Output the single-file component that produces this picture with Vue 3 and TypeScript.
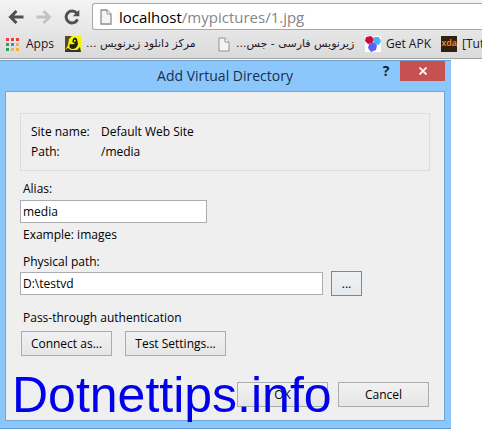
<script setup lang="ts">
import { ref } from 'vue'

const url = ref('localhost/mypictures/1.jpg')
const alias = ref('media')
const physicalPath = ref('D:\\testvd')
const appColours: string[] = [
  '#f23b3b', '#f23b3b', '#f23b3b',
  '#2f9e58', '#2b8cf0', '#fbb13c',
  '#2f9e58', '#fbb13c', '#fbb13c',
]
</script>

<template>
  <div class="browser">
    <header class="chrome">
      <nav class="toolbar" aria-label="Navigation">
        <button class="tool" type="button" aria-label="Back">
          <svg width="16" height="14" viewBox="0 0 16 14"><path d="M15.5 7H3M8.5 1L2.5 7L8.5 13" fill="none" stroke="#505050" stroke-width="3" /></svg>
        </button>
        <button class="tool" type="button" aria-label="Forward">
          <svg width="16" height="14" viewBox="0 0 16 14"><path d="M0.5 7H13M7.5 1L13.5 7L7.5 13" fill="none" stroke="#c2c2c2" stroke-width="2.8" /></svg>
        </button>
        <button class="tool" type="button" aria-label="Reload">
          <svg width="16" height="16" viewBox="0 0 16 16"><path d="M12.8 4.2A6 6 0 1 0 13.6 10.4" fill="none" stroke="#505050" stroke-width="2.9" /><path d="M15.3 0.8V7.3H8.8Z" fill="#505050" /></svg>
        </button>
        <div class="omnibox">
          <svg width="12" height="16" viewBox="0 0 12 16"><path d="M1 1H7L11 5V15H1Z" fill="#f4f4f4" stroke="#8f8f8f" stroke-width="1.3" /><path d="M7 1V5H11" fill="#fff" stroke="#8f8f8f" /></svg>
          <a class="url" :href="'http://' + url"><span class="host">localhost</span>/mypictures/1.jpg</a>
        </div>
      </nav>
      <nav class="bookmarks" aria-label="Bookmarks">
        <a class="bookmark apps" href="#">
          <span class="grid"><i v-for="(c, i) in appColours" :key="i" :style="{ background: c }"></i></span>
          <span>Apps</span>
        </a>
        <a class="bookmark first" href="#">
          <svg width="16" height="16" viewBox="0 0 16 16">
            <rect width="16" height="16" fill="#f5f500" />
            <path d="M0 0H7L4 3L3 9L1 13L0 14Z" fill="#554c25" />
            <path d="M0 14L3 12L6 14L12 14L15 11L16 16H0Z" fill="#37352f" />
            <path d="M8 3Q10 0 12 3L13 8Q12 13 7 13Q3 12 5 8Q9 9 10 7Q6 7 8 3Z" fill="#25230e" />
            <path d="M9 4Q10 3 11 5L9 6Z" fill="#f5f500" />
          </svg>
          <span class="persian" dir="rtl">مرکز دانلود زیرنویس ...</span>
        </a>
        <a class="bookmark second" href="#">
          <svg width="12" height="15" viewBox="0 0 12 15"><path d="M1 1H7L11 5V14H1Z" fill="#f4f4f4" stroke="#929292" /><path d="M7 1V5H11" fill="#fff" stroke="#929292" /></svg>
          <span class="persian" dir="rtl">زیرنویس فارسی - جس...</span>
        </a>
        <a class="bookmark third" href="#">
          <svg width="16" height="16" viewBox="0 0 16 16">
            <rect width="16" height="16" fill="#fff" />
            <path d="M1 1L6 0L9 3L7 7L3 8L0 5Z" fill="#c90b3c" />
            <path d="M9 1L14 1L16 5L14 9L10 8L8 5Z" fill="#48b2f5" />
            <path d="M4 8L8 6L12 9L11 14L6 16L3 12Z" fill="#6060ee" />
          </svg>
          <span>Get APK</span>
        </a>
        <a class="bookmark fourth" href="#">
          <span class="xda">xda</span>
          <span>[Tut</span>
        </a>
      </nav>
    </header>

    <main class="dialog" role="dialog" aria-labelledby="dialog-title">
      <div class="titlebar">
        <h1 id="dialog-title">Add Virtual Directory</h1>
        <div class="caption">
          <button class="help" type="button" aria-label="Help">?</button>
          <button class="close" type="button" aria-label="Close">
            <svg width="8" height="8" viewBox="0 0 8 8"><path d="M0.5 0.5L7.5 7.5M7.5 0.5L0.5 7.5" stroke="#fff" stroke-width="1.8" /></svg>
          </button>
        </div>
      </div>
      <form class="content" @submit.prevent>
        <dl class="site">
          <dt>Site name:</dt><dd>Default Web Site</dd>
          <dt>Path:</dt><dd>/media</dd>
        </dl>
        <label class="line" for="alias">Alias:</label>
        <input id="alias" v-model="alias" class="field alias" type="text">
        <p class="line example">Example: images</p>
        <label class="line" for="path">Physical path:</label>
        <div class="path-row">
          <input id="path" v-model="physicalPath" class="field path" type="text">
          <button class="btn browse" type="button">...</button>
        </div>
        <p class="line auth">Pass-through authentication</p>
        <div class="actions">
          <button class="btn connect" type="button">Connect as...</button>
          <button class="btn test" type="button">Test Settings...</button>
        </div>
        <div class="footer">
          <button class="btn" type="submit">OK</button>
          <button class="btn" type="button">Cancel</button>
        </div>
      </form>
      <div class="watermark">Dotnettips.info</div>
    </main>
  </div>
</template>

<style>
body {
  background: #fff;
}
</style>

<style scoped>
* {
  box-sizing: border-box;
}
.browser {
  font-family: "Open Sans", "Noto Sans", "DejaVu Sans", sans-serif;
  font-size: 12px;
  line-height: 16px;
  color: #000;
  overflow: hidden;
}
button {
  font: inherit;
  color: inherit;
  padding: 0;
}
svg {
  display: block;
  flex: none;
}
.chrome {
  background: linear-gradient(#f4f4f4, #dadada);
  border-bottom: 1px solid #a0a0a0;
}
.toolbar {
  display: flex;
  align-items: center;
  height: 30px;
  padding: 3px 0 0 8px;
  gap: 12px;
}
.tool {
  border: 0;
  background: none;
}
.omnibox {
  flex: 1;
  display: flex;
  align-items: center;
  gap: 7px;
  height: 27px;
  padding-left: 7px;
  background: #fff;
  border: 1px solid #a8a8a8;
  border-right: 0;
  border-radius: 3px 0 0 3px;
}
.url {
  color: #858585;
  font-size: 15px;
  line-height: 20px;
  text-decoration: none;
}
.host {
  color: #000;
}
.bookmarks {
  display: flex;
  align-items: center;
  height: 28px;
  padding-left: 6px;
  white-space: nowrap;
  overflow: hidden;
}
.bookmark {
  display: flex;
  align-items: center;
  flex: none;
  gap: 5px;
  color: #1e1428;
  text-decoration: none;
}
.apps {
  gap: 7px;
  width: 59px;
}
.first {
  width: 153px;
}
.second {
  gap: 6px;
  width: 147px;
}
.third {
  width: 76px;
}
.grid {
  display: grid;
  grid-template-columns: repeat(3, 3px);
  grid-auto-rows: 3px;
  gap: 2px;
}
.persian {
  font-family: "DejaVu Sans", sans-serif;
  font-size: 11px;
}
.xda {
  width: 16px;
  height: 16px;
  background: #32200f;
  color: #f58220;
  font: bold 9px/15px "Liberation Sans", sans-serif;
  text-align: center;
}
.dialog {
  position: relative;
  margin: 1px 31px 0 0;
  padding: 0 6px 7px 5px;
  background: #8cc7fb;
  border-top: 1px solid #6f9fca;
  border-bottom: 1px solid #5f9bd2;
}
.titlebar {
  display: grid;
  grid-template-columns: 1fr auto 1fr;
  height: 30px;
}
h1 {
  grid-column: 2;
  margin: 0;
  padding-top: 5px;
  font-size: 14px;
  line-height: 20px;
  font-weight: 400;
  color: #15304c;
}
.caption {
  display: flex;
  justify-content: flex-end;
  align-items: flex-start;
}
.help {
  width: 28px;
  height: 20px;
  border: 0;
  background: none;
  font-size: 14px;
  font-weight: 700;
  color: #0c2033;
}
.close {
  display: flex;
  align-items: center;
  justify-content: center;
  width: 45px;
  height: 20px;
  border: 0;
  background: #c75050;
}
.content {
  padding: 21px 14px 13px;
  background: #efefef;
  border: 1px solid #71a6d8;
}
.site {
  display: grid;
  grid-template-columns: 70px 1fr;
  row-gap: 3px;
  margin: 0 0 10px;
  padding: 10px;
  height: 58px;
  border: 1px solid #dcdede;
}
dd {
  margin: 0;
}
.site,
.line,
.field,
.btn {
  font-size: 12px;
  line-height: 16px;
}
.line {
  display: block;
  margin: 0;
  padding-left: 3px;
}
.field {
  display: block;
  height: 23px;
  padding: 0 2px;
  font-family: inherit;
  color: #000;
  background: #fff;
  border: 1px solid #a9adb0;
  border-radius: 0;
}
.alias {
  width: 187px;
  margin: 3px 0 4px;
}
.example {
  margin-bottom: 11px;
}
.path-row {
  display: flex;
  align-items: center;
  gap: 8px;
  margin-top: 1px;
}
.path {
  width: 303px;
}
.btn {
  width: 91px;
  height: 25px;
  background: linear-gradient(#f1f1f1, #e6e6e6);
  border: 1px solid #a9adb0;
}
.browse {
  width: 31px;
  border-color: #4398dc;
  background: linear-gradient(#eef2f5, #e6eaed);
}
.auth {
  margin: 14px 0 5px;
}
.actions {
  display: flex;
  gap: 13px;
  padding-left: 1px;
}
.test {
  width: 101px;
}
.footer {
  display: flex;
  justify-content: flex-end;
  gap: 10px;
  margin-top: 26px;
  padding-right: 1px;
}
.watermark {
  position: absolute;
  left: 12px;
  bottom: 5px;
  font-family: "Liberation Sans", Arial, sans-serif;
  font-size: 50px;
  line-height: 56px;
  color: #0000ec;
  white-space: nowrap;
  pointer-events: none;
}
</style>
